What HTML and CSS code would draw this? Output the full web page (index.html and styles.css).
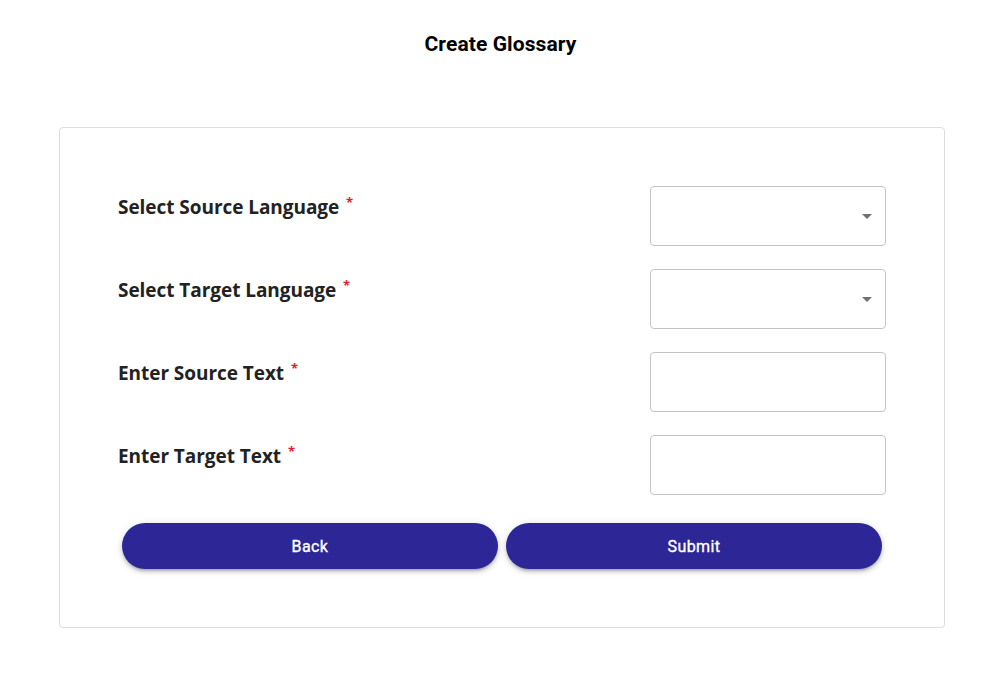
FILE: index.html
```html
<!DOCTYPE html>
<html>
<head>
<meta charset="utf-8">
<link rel="stylesheet" href="styles.css">
</head>
<body>
<div class="page">
  <h1 class="title">Create Glossary</h1>
  <div class="card">
    <div class="row">
      <label class="label">Select Source Language <span class="req">*</span></label>
      <div class="field select"><span class="caret"></span></div>
    </div>
    <div class="row">
      <label class="label">Select Target Language <span class="req">*</span></label>
      <div class="field select"><span class="caret"></span></div>
    </div>
    <div class="row">
      <label class="label">Enter Source Text <span class="req">*</span></label>
      <div class="field"></div>
    </div>
    <div class="row">
      <label class="label">Enter Target Text <span class="req">*</span></label>
      <div class="field"></div>
    </div>
    <div class="buttons">
      <button class="btn">Back</button>
      <button class="btn">Submit</button>
    </div>
  </div>
</div>
</body>
</html>
```
FILE: styles.css
```css
* { box-sizing: border-box; }
html, body { margin: 0; padding: 0; background: #fff; }
body { font-family: Roboto, "Liberation Sans", sans-serif; }
.page { padding-top: 31px; }
.title {
  margin: 0;
  text-align: center;
  font-size: 21px;
  font-weight: 700;
  color: #000;
  line-height: 26px;
  letter-spacing: 0.1px;
}
.card {
  margin: 70px 0 0 59px;
  width: 886px;
  border: 1px solid #ddd;
  border-radius: 4px;
  padding: 58px 58px 58px 58px;
}
.row {
  display: flex;
  justify-content: space-between;
  align-items: flex-start;
  margin-bottom: 23px;
}
.label {
  font-family: "Open Sans", "Noto Sans", sans-serif;
  font-weight: 700;
  font-size: 19px;
  color: #222;
  padding-top: 7px;
  letter-spacing: -0.05px;
}
.req {
  color: #e8192c;
  font-size: 13px;
  vertical-align: 7px;
  margin-left: 2px;
}
.field {
  width: 236px;
  height: 60px;
  border: 1px solid #c4c4c4;
  border-radius: 4px;
  position: relative;
}
.caret {
  position: absolute;
  right: 13px;
  top: 27px;
  width: 0;
  height: 0;
  border-left: 5px solid transparent;
  border-right: 5px solid transparent;
  border-top: 5px solid #707070;
}
.buttons {
  display: flex;
  gap: 0;
  padding-top: 5px;
}
.btn {
  flex: 1;
  margin: 0 4px;
  height: 46px;
  border: none;
  border-radius: 23px;
  background: #2c2697;
  color: #fff;
  font-family: Roboto, sans-serif;
  font-weight: 400;
  font-size: 16px;
  letter-spacing: 0.4px;
  -webkit-text-stroke: 0.35px #fff;
  box-shadow: 0 3px 3px -2px rgba(0,0,0,0.25), 0 3px 4px 0 rgba(0,0,0,0.14), 0 1px 8px 0 rgba(0,0,0,0.12);
  cursor: pointer;
}
```
